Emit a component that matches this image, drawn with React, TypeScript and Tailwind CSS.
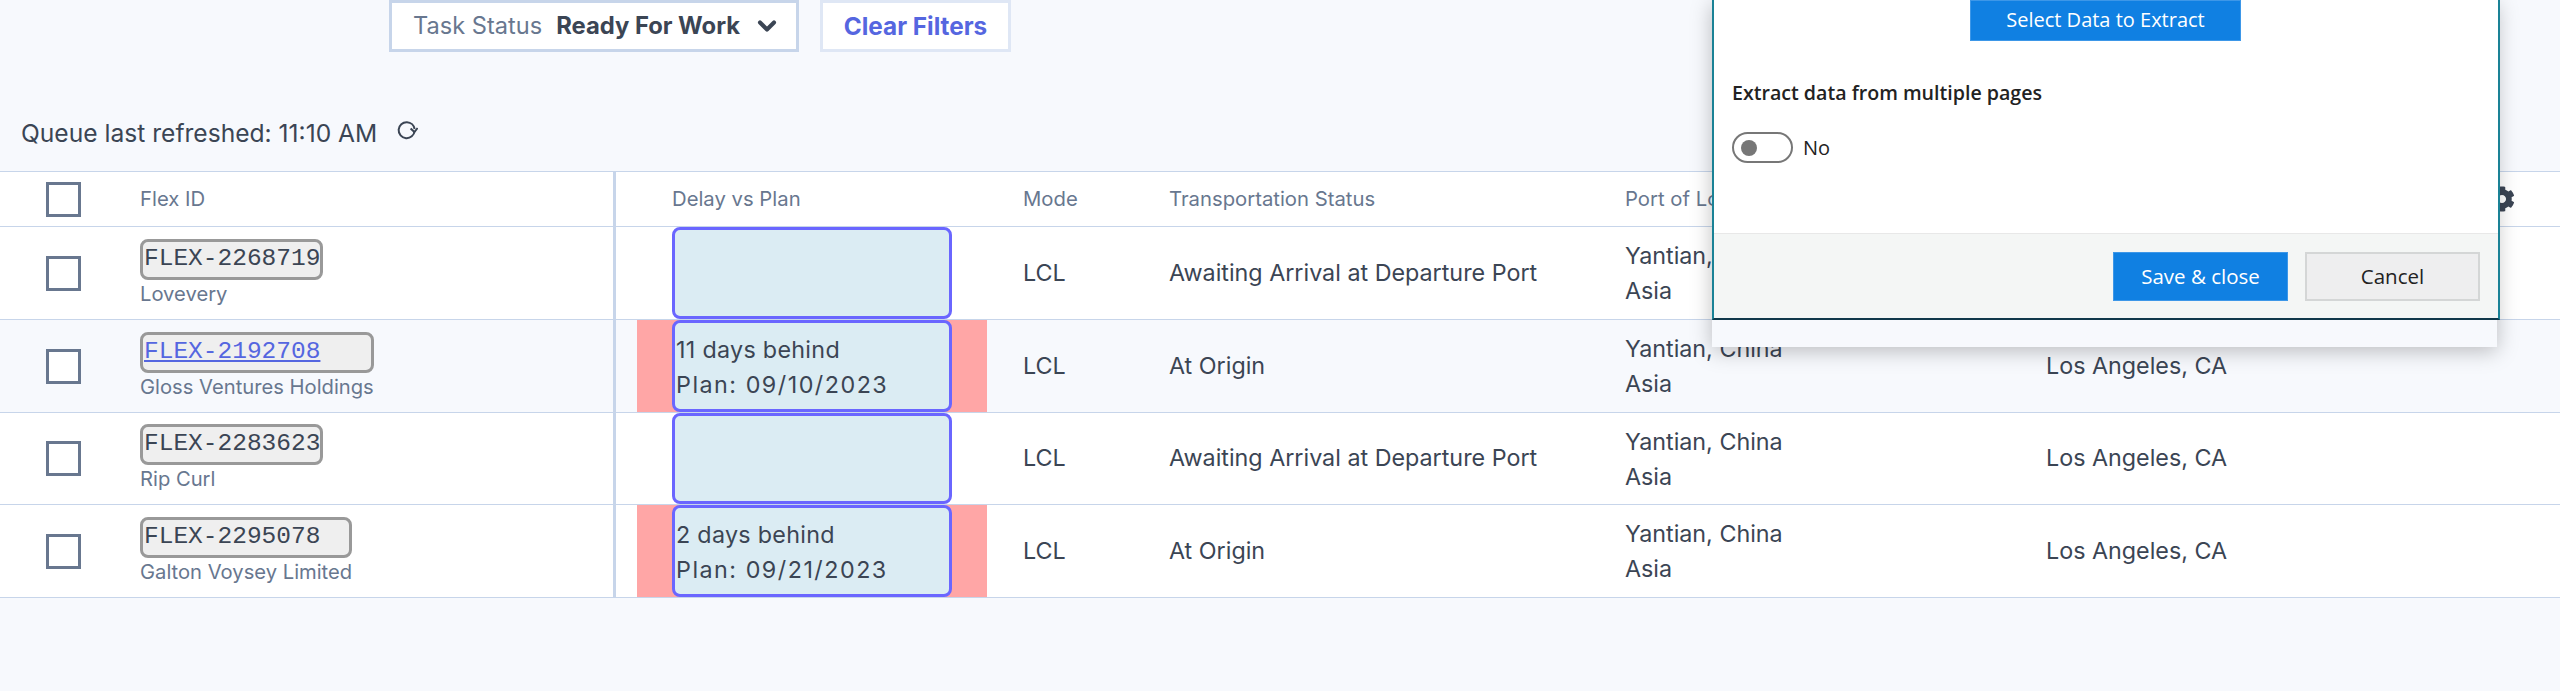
import { ChevronDown } from 'lucide-react'
import { FaCog } from 'react-icons/fa'

const rows = [
  { id: 'FLEX-2268719', company: 'Lovevery', status: 'Awaiting Arrival at Departure Port', height: 'h-[93px]', hideDest: true },
  { id: 'FLEX-2192708', company: 'Gloss Ventures Holdings', status: 'At Origin', delay: '11 days behind', plan: 'Plan: 09/10/2023', link: true, shaded: true, height: 'h-[93px]' },
  { id: 'FLEX-2283623', company: 'Rip Curl', status: 'Awaiting Arrival at Departure Port', height: 'h-[92px]' },
  { id: 'FLEX-2295078', company: 'Galton Voysey Limited', status: 'At Origin', delay: '2 days behind', plan: 'Plan: 09/21/2023', height: 'h-[93px]' },
]

function Checkbox() {
  return <div className="h-[35px] w-[35px] border-[3px] border-[#68778f] bg-white" />
}

function RefreshIcon() {
  return (
    <svg width="21" height="19" viewBox="0 0 21 19" fill="none" className="mb-[5px] ml-[20px] text-[#3b4554]">
      <path d="M17.6 10A8 8 0 1 1 10 1.2A8 8 0 0 1 17.6 8" stroke="currentColor" strokeWidth="2" />
      <path d="M13.6 7.5 17.4 11 20.6 7" stroke="currentColor" strokeWidth="2" />
    </svg>
  )
}

function Row({ row }: { row: (typeof rows)[number] }) {
  return (
    <div className={`flex border-b border-[#c7d5ea] text-[23.3px] text-[#3b4554] ${row.height} ${row.shaded ? 'bg-[#f7f9fd]' : 'bg-white'}`}>
      <div className="flex w-[140px] items-center pl-[46px]">
        <Checkbox />
      </div>
      <div className="flex w-[476px] items-center border-r-[3px] border-[#c7d5ea]">
        <div className="inline-flex flex-col">
          <div className="h-[41px] rounded-lg border-[3px] border-[#999999] bg-[#efefef] pl-[1px] font-['Liberation_Mono',monospace] text-[24.5px] leading-[34px]">
            {row.link ? <a className="text-[#5566e0] underline">{row.id}</a> : row.id}
          </div>
          <div className="text-[20.2px] leading-[28px] text-[#68778f]">{row.company}</div>
        </div>
      </div>
      <div className="w-[407px] pl-[21px]">
        <div className={`h-full w-[350px] px-[35px] ${row.delay ? 'bg-[#ffa6a6]' : ''}`}>
          <div className="h-full rounded-lg border-[3px] border-[#6a66ff] bg-[#dbecf3] pl-[1px] pt-[9px] leading-[35px]">
            {row.delay && (
              <>
                <div className="tracking-[0.3px]">{row.delay}</div>
                <div className="tracking-[1.5px]">{row.plan}</div>
              </>
            )}
          </div>
        </div>
      </div>
      <div className="flex w-[146px] items-center">LCL</div>
      <div className="flex w-[456px] items-center">{row.status}</div>
      <div className="flex w-[421px] flex-col justify-center leading-[35px]">
        <div>Yantian, China</div>
        <div>Asia</div>
      </div>
      <div className="flex flex-1 items-center">{row.hideDest ? null : 'Los Angeles, CA'}</div>
    </div>
  )
}

export default function App() {
  return (
    <div className="relative h-[691px] overflow-hidden bg-[#f7f9fd] font-['Inter',sans-serif]">
      <div className="flex gap-[21px] pl-[389px]">
        <div className="flex h-[52px] w-[410px] items-center border-[3px] border-[#c7d5ea] bg-white pl-[21px] text-[23.6px]">
          <span className="text-[#68778f]">Task Status</span>
          <span className="ml-[14px] text-[23.8px] font-bold text-[#3b4554]">Ready For Work</span>
          <ChevronDown className="ml-[13px] text-[#3b4554]" size={28} strokeWidth={3.5} />
        </div>
        <div className="flex h-[52px] w-[191px] items-center justify-center border-[3px] border-[#dfe7f5] bg-white text-[24.3px] font-bold text-[#5566e0]">
          Clear Filters
        </div>
      </div>

      <div className="flex h-[119px] items-center pl-[21px] pt-[43px] text-[#3b4554]">
        <span className="text-[24.6px]">Queue last refreshed: 11:10 AM</span>
        <RefreshIcon />
      </div>

      <div className="border-t border-[#c7d5ea]">
        <div className="flex h-[55px] border-b border-[#c7d5ea] bg-white text-[20.3px] text-[#68778f]">
          <div className="flex w-[140px] items-center pl-[46px]">
            <Checkbox />
          </div>
          <div className="flex w-[476px] items-center border-r-[3px] border-[#c7d5ea]">Flex ID</div>
          <div className="flex w-[407px] items-center pl-[56px]">Delay vs Plan</div>
          <div className="flex w-[146px] items-center">Mode</div>
          <div className="flex w-[456px] items-center">Transportation Status</div>
          <div className="flex w-[421px] items-center">Port of Loading</div>
          <div className="flex flex-1 items-center">
            <FaCog className="ml-auto mr-[45px] text-[#3b4554]" size={26} />
          </div>
        </div>
        {rows.map((row) => (
          <Row key={row.id} row={row} />
        ))}
      </div>

      <div className="absolute left-[1712px] top-0 h-[347px] w-[785px] bg-[#f7f9fd] font-['Open_Sans',sans-serif] shadow-[0_4px_20px_rgba(0,0,0,0.25)]">
        <div className="flex h-[320px] w-[788px] flex-col border-x-2 border-b-2 border-x-[#1a8296] border-b-[#10384a] bg-white">
          <div className="flex-1 pl-[18px]">
            <div className="ml-[238px] flex h-[41px] w-[271px] items-center justify-center border border-[#3d97e8] bg-[#1080e2] pb-[2px] text-[20px] text-white">
              Select Data to Extract
            </div>
            <div className="mt-[38px] text-[19.6px] font-semibold leading-[28px] text-[#222222]">Extract data from multiple pages</div>
            <div className="mt-[25px] flex items-center">
              <div className="flex h-[31px] w-[61px] items-center rounded-full border-2 border-[#777777] pl-[7px]">
                <div className="h-[16px] w-[16px] rounded-full bg-[#777777]" />
              </div>
              <span className="ml-[10px] text-[20px] text-[#222222]">No</span>
            </div>
          </div>
          <div className="flex h-[85px] justify-end gap-[17px] border-t border-[#e8e8e8] bg-[#f4f6f5] pr-[18px] pt-[18px]">
            <button className="h-[49px] w-[175px] border border-[#3d97e8] bg-[#1080e2] text-[20.5px] text-white">Save &amp; close</button>
            <button className="h-[49px] w-[175px] border-2 border-[#d4d6d6] bg-[#eeeeef] text-[20.5px] text-[#222222]">Cancel</button>
          </div>
        </div>
      </div>
    </div>
  )
}
